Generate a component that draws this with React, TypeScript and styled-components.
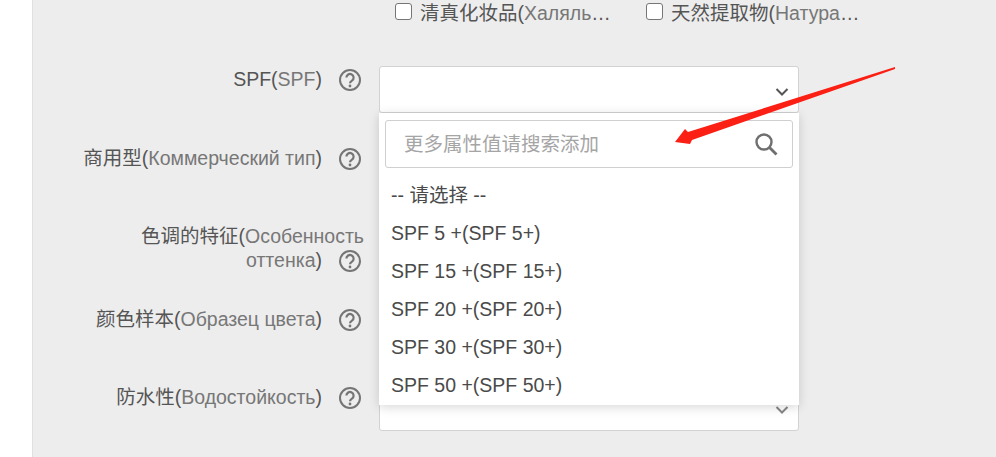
import React from 'react';
import styled, { createGlobalStyle } from 'styled-components';

const Global = createGlobalStyle`
  html, body { margin: 0; padding: 0; background: #fff; overflow: hidden; }
  body { font-family: "Liberation Sans", "Noto Sans CJK SC", Arial, sans-serif; font-size: 19.5px; color: #555; }
`;
const Page = styled.div`
  position: relative;
  width: 996px;
  height: 457px;
  padding-left: 32px;
  box-sizing: border-box;
  overflow: hidden;
`;
const Panel = styled.main`
  height: 457px;
  background: #ededed;
  border-left: 1px solid #e0e0e0;
  display: flex;
  flex-direction: column;
`;
const CheckRow = styled.div`
  display: flex;
  height: 26px;
  margin: 0 0 40px 362px;
`;
const CheckItem = styled.label`
  width: 251px;
  display: flex;
  align-items: center;
  gap: 8px;
`;
const Box = styled.span`
  width: 15px;
  height: 15px;
  border: 1.5px solid #767676;
  border-radius: 3px;
  background: #fff;
  flex: none;
  margin-top: -4px;
`;
const CheckText = styled.span`
  width: 192px;
  overflow: hidden;
  white-space: nowrap;
  text-overflow: ellipsis;
  line-height: 26px;
`;
const Row = styled.div<{ $h: number }>`
  display: grid;
  grid-template-columns: 331px 420px;
  column-gap: 15px;
  height: ${p => p.$h}px;
`;
const Label = styled.div`
  text-align: right;
  line-height: 24px;
  padding: 1px 0 0 40px;
  align-self: start;
`;
const Ru = styled.span`
  color: #777;
`;
const Help = styled.svg`
  width: 24px;
  height: 24px;
  margin: -4px 2px -2px 16px;
  vertical-align: middle;
`;
const Select = styled.div`
  position: relative;
  width: 420px;
  height: 47px;
  box-sizing: border-box;
  background: #fff;
  border: 1px solid #d2d2d2;
  border-radius: 3px;
`;
const Chevron = styled.svg<{ $faded?: boolean }>`
  position: absolute;
  right: 9px;
  top: 20px;
  width: 14px;
  height: 10px;
  opacity: ${p => (p.$faded ? 0.7 : 1)};
`;
const Popover = styled.div`
  position: absolute;
  left: -1px;
  top: 46px;
  width: 420px;
  height: 292px;
  box-sizing: border-box;
  background: #fff;
  box-shadow: 0 2px 10px rgba(0, 0, 0, 0.16);
  padding: 7px 6px 0;
  z-index: 2;
`;
const Search = styled.div`
  height: 48px;
  box-sizing: border-box;
  border: 1px solid #cfcfcf;
  border-radius: 3px;
  display: flex;
  align-items: center;
  justify-content: space-between;
  padding: 0 14px 4px 18px;
  margin-bottom: 8px;
  color: #a5a5a5;
`;
const SearchIcon = styled.svg`
  width: 24px;
  height: 24px;
  margin-top: 4px;
`;
const Option = styled.div`
  height: 38px;
  line-height: 38px;
  padding-left: 6px;
  white-space: nowrap;
  color: #4a4a4a;
  &:first-of-type {
    height: 39px;
    line-height: 40px;
  }
`;
const Arrow = styled.svg`
  position: absolute;
  left: 0;
  top: 0;
  width: 996px;
  height: 457px;
  pointer-events: none;
  z-index: 3;
`;

const HelpIcon = () => (
  <Help viewBox="0 0 24 24" fill="none">
    <circle cx="12" cy="12" r="10" stroke="#757575" strokeWidth="2" />
    <path d="M8.4 9.6a3.6 3.6 0 1 1 5.6 3c-1.2.8-2 1.3-2 2.6" stroke="#757575" strokeWidth="2.2" />
    <circle cx="12" cy="18" r="1.4" fill="#757575" />
  </Help>
);
const Arrowhead = ({ faded }: { faded?: boolean }) => (
  <Chevron viewBox="0 0 14 10" fill="none" $faded={faded}>
    <path d="M1.5 2l5.5 5.5L12.5 2" stroke="#555" strokeWidth="2" />
  </Chevron>
);

export default function App() {
  return (
    <Page>
      <Global />
      <Panel>
        <CheckRow>
          <CheckItem><Box /><CheckText>清真化妆品(<Ru>Халяльная косметика</Ru>)</CheckText></CheckItem>
          <CheckItem><Box /><CheckText>天然提取物(<Ru>Натуральные экстракты</Ru>)</CheckText></CheckItem>
        </CheckRow>
        <Row $h={79}>
          <Label>SPF(<Ru>SPF</Ru>)<HelpIcon /></Label>
          <Select>
            <Arrowhead />
            <Popover>
              <Search>
                更多属性值请搜索添加
                <SearchIcon viewBox="0 0 24 24" fill="none">
                  <circle cx="10" cy="10" r="7.5" stroke="#6f6f6f" strokeWidth="2.4" />
                  <path d="M15.5 15.5l7 7" stroke="#6f6f6f" strokeWidth="2.8" />
                </SearchIcon>
              </Search>
              <Option>-- 请选择 --</Option>
              <Option>SPF 5 +(SPF 5+)</Option>
              <Option>SPF 15 +(SPF 15+)</Option>
              <Option>SPF 20 +(SPF 20+)</Option>
              <Option>SPF 30 +(SPF 30+)</Option>
              <Option>SPF 50 +(SPF 50+)</Option>
            </Popover>
          </Select>
        </Row>
        <Row $h={78}>
          <Label>商用型(<Ru>Коммерческий тип</Ru>)<HelpIcon /></Label>
          <Select><Arrowhead /></Select>
        </Row>
        <Row $h={83}>
          <Label>色调的特征(<Ru>Особенность оттенка</Ru>)<HelpIcon /></Label>
          <Select><Arrowhead /></Select>
        </Row>
        <Row $h={78}>
          <Label>颜色样本(<Ru>Образец цвета</Ru>)<HelpIcon /></Label>
          <Select><Arrowhead /></Select>
        </Row>
        <Row $h={47}>
          <Label>防水性(<Ru>Водостойкость</Ru>)<HelpIcon /></Label>
          <Select><Arrowhead faded /></Select>
        </Row>
      </Panel>
      <Arrow viewBox="0 0 996 457">
        <polygon points="895,67 688,132 685,129 675,142 690,144 692,140 895,69" fill="#fb1f14" />
      </Arrow>
    </Page>
  );
}
